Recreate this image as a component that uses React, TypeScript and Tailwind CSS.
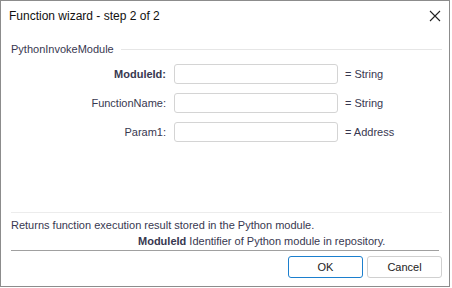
import React from 'react';

const params = [
  { label: 'ModuleId:', type: '= String', bold: true },
  { label: 'FunctionName:', type: '= String', bold: false },
  { label: 'Param1:', type: '= Address', bold: false },
];

const App: React.FC = () => {
  return (
    <div className="w-[452px] h-[288px] bg-white">
      <div className="w-[450px] h-[287px] border border-[#8c8c8c] flex flex-col bg-white text-[#383850]">
        {/* title bar */}
        <div className="h-[29px] flex items-center justify-between pl-[8px] pr-[8px]">
          <span className="text-[12px] text-[#111] font-['Liberation_Sans',sans-serif]">Function wizard - step 2 of 2</span>
          <svg width="12" height="12" viewBox="0 0 12 12" className="mt-[1px]">
            <path d="M1 1 L11 11 M11 1 L1 11" stroke="#222" strokeWidth="1.1" />
          </svg>
        </div>

        <div className="flex flex-col pl-[10px] pr-[7px] text-[11px] font-['Liberation_Sans',sans-serif]">
          {/* group header */}
          <div className="mt-[11px] h-[16px] flex items-center">
            <span>PythonInvokeModule</span>
            <div className="flex-1 h-px bg-[#e6e6e6] ml-[7px]" />
          </div>

          {/* parameter rows */}
          <div className="mt-[7px] flex flex-col gap-[9px]">
            {params.map((p) => (
              <div key={p.label} className="h-[20px] flex items-center">
                <span className={`w-[155px] text-right ${p.bold ? 'font-bold' : ''}`}>{p.label}</span>
                <div className="ml-[8px] w-[164px] h-[20px] border border-[#d4d4d4] rounded-[3px] bg-white" />
                <span className="ml-[7px]">{p.type}</span>
              </div>
            ))}
          </div>

          {/* description */}
          <div className="mt-[70px] h-px bg-[#ececec]" />
          <div className="mt-[4px] leading-[16px]">Returns function execution result stored in the Python module.</div>
          <div className="leading-[16px] pl-[127px]">
            <span className="font-bold">ModuleId</span> Identifier of Python module in repository.
          </div>
          <div className="mt-[1px] h-px bg-[#a0a0a0] mr-[3px]" />

          {/* buttons */}
          <div className="mt-[5px] flex justify-end gap-[4px]">
            <button className="w-[75px] h-[22px] border border-[#1c7fce] rounded-[3px] bg-white text-[11px] text-[#222]">OK</button>
            <button className="w-[75px] h-[22px] border border-[#d0d0d0] rounded-[3px] bg-white text-[11px] text-[#222]">Cancel</button>
          </div>
        </div>
      </div>
    </div>
  );
};

export default App;
